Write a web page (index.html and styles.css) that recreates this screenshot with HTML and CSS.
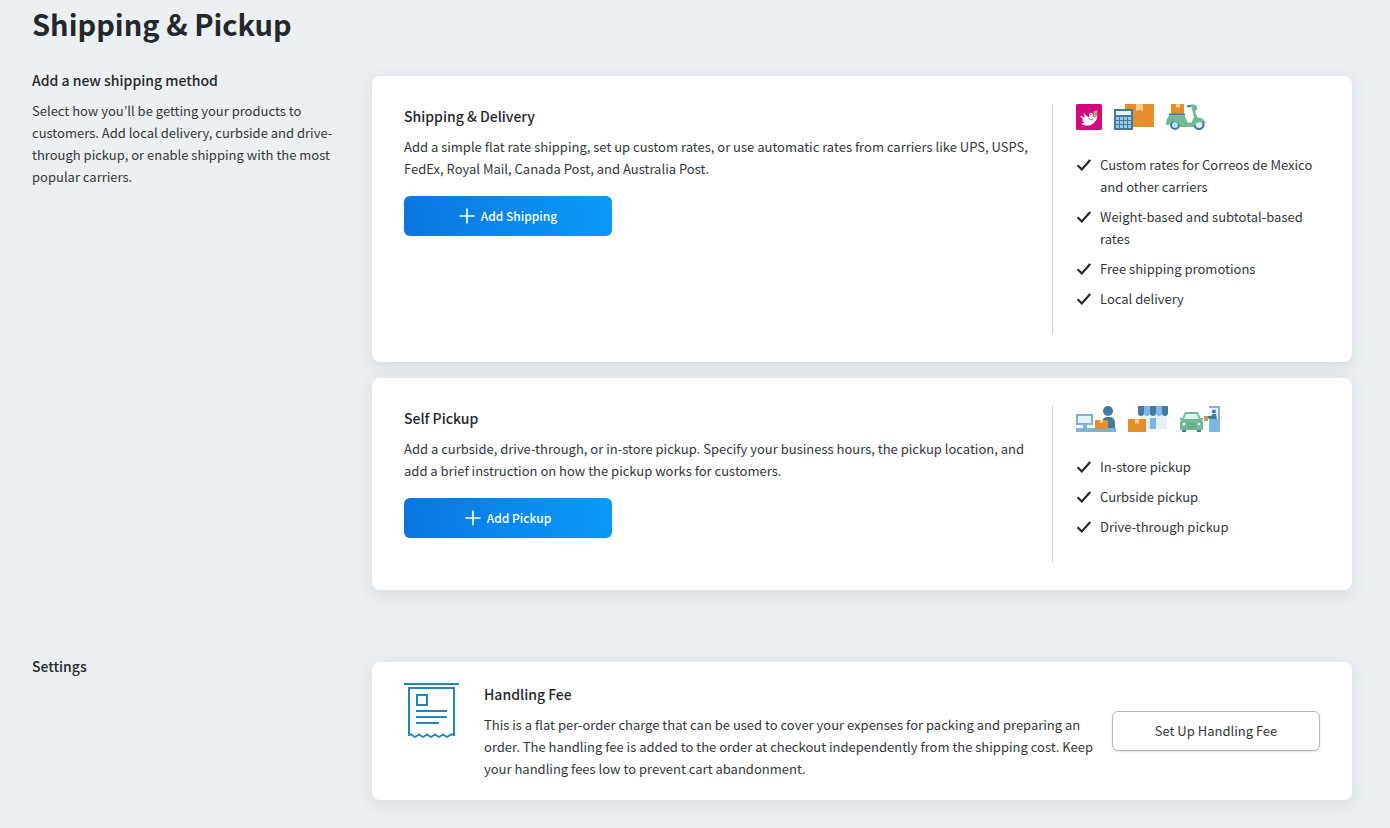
FILE: index.html
```html
<!DOCTYPE html>
<html lang="en">
<head>
<meta charset="utf-8">
<meta name="viewport" content="width=device-width, initial-scale=1">
<title>Shipping &amp; Pickup</title>
<link rel="stylesheet" href="styles.css">
</head>
<body>
<svg class="sprite" aria-hidden="true">
  <symbol id="check" viewBox="0 0 16 16"><path d="M1.600 8.200l4.200 4.300L14.200 3" fill="none" stroke="currentColor" stroke-width="2.200"/></symbol>
  <symbol id="plus" viewBox="0 0 16 16"><path d="M8 .5v15M.5 8h15" fill="none" stroke="currentColor" stroke-width="1.600"/></symbol>
</svg>
<main class="page">
  <h1 class="page-title">Shipping &amp; Pickup</h1>

  <section class="section">
    <div class="intro">
      <h2 class="heading">Add a new shipping method</h2>
      <p class="text">Select how you’ll be getting your products to customers. Add local delivery, curbside and drive-through pickup, or enable shipping with the most popular carriers.</p>
    </div>
    <div class="cards">
      <article class="card">
        <div class="card-main">
          <h3 class="heading">Shipping &amp; Delivery</h3>
          <p class="text">Add a simple flat rate shipping, set up custom rates, or use automatic rates from carriers like UPS, USPS, FedEx, Royal Mail, Canada Post, and Australia Post.</p>
          <button class="btn btn-primary" type="button"><svg class="plus" aria-hidden="true"><use href="#plus"/></svg>Add Shipping</button>
        </div>
        <div class="card-side">
          <div class="icons">
            <svg width="26" height="26" viewBox="0 0 26 26" aria-hidden="true">
              <rect width="26" height="26" rx="1.500" fill="#d6067f"/>
              <path d="M4 11.500l5 2L7.500 9l4.500 4 1.500-.5-.5-2.500 2-1.500 2 1.500.5 3.500 4-2-1 4-2.500 3.500-4 2.500H9l-4-1.800 3.500-.9-3-2.300h2z" fill="#fff"/>
              <path d="M12.500 13.500l2 2.500 3-1" fill="none" stroke="#d6067f" stroke-width=".7"/>
              <circle cx="14.800" cy="10.500" r=".6" fill="#5c1140"/>
              <path d="M17.500 7.500l4-1.500-.5 6.500-3 1.500z" fill="#c3a36a"/>
            </svg>
            <svg width="40" height="26" viewBox="0 0 40 26" aria-hidden="true">
              <path d="M11 0h29v23H11z" fill="#e58e2e"/>
              <path d="M22 0h7v7l-3.500-1L22 7z" fill="#f6cf83"/>
              <path d="M0 5h19v21H0z" fill="#447a9c"/>
              <path d="M2 7h15v4H2z" fill="#e4f3fa"/>
              <path d="M2 13h3v3H2zm4 0h3v3H6zm4 0h3v3h-3zm4 0h3v3h-3zM2 17h3v3H2zm4 0h3v3H6zm4 0h3v3h-3zm4 0h3v3h-3zM2 21h3v3H2zm4 0h3v3H6zm4 0h3v3h-3zm4 0h3v3h-3z" fill="#98c8e9"/>
            </svg>
            <svg width="40" height="26" viewBox="0 0 40 26" aria-hidden="true">
              <circle cx="9" cy="21" r="4" fill="#b9dded" stroke="#447a9c" stroke-width="2"/>
              <circle cx="33" cy="20.500" r="4.500" fill="#dceef4" stroke="#447a9c" stroke-width="2.200"/>
              <path d="M5 0h13v10H5z" fill="#e58e2e"/><path d="M10 0h4v4l-2-1-2 1z" fill="#f6cf83"/>
              <path d="M21 1.200h4v2h-4z" fill="#447a9c"/>
              <path d="M3 9.500h16v2H3z" fill="#447a9c"/>
              <path d="M24 .5h4l3 1.500v4l-2 1 2.500 6.500c4.500 0 7.500 3 8.500 6-5-3-11-1-12 3.500H14c0-6-9-8-11-2H0c0-6 2-9.500 6-9.500h12.500l3 7h4L28 13 25.500 3z" fill="#71b995"/>
            </svg>
          </div>
          <ul class="features">
            <li class="feature"><svg class="check" aria-hidden="true"><use href="#check"/></svg><span>Custom rates for Correos de Mexico and other carriers</span></li>
            <li class="feature"><svg class="check" aria-hidden="true"><use href="#check"/></svg><span>Weight-based and subtotal-based rates</span></li>
            <li class="feature"><svg class="check" aria-hidden="true"><use href="#check"/></svg><span>Free shipping promotions</span></li>
            <li class="feature"><svg class="check" aria-hidden="true"><use href="#check"/></svg><span>Local delivery</span></li>
          </ul>
        </div>
      </article>

      <article class="card">
        <div class="card-main">
          <h3 class="heading">Self Pickup</h3>
          <p class="text">Add a curbside, drive-through, or in-store pickup. Specify your business hours, the pickup location, and add a brief instruction on how the pickup works for customers.</p>
          <button class="btn btn-primary" type="button"><svg class="plus" aria-hidden="true"><use href="#plus"/></svg>Add Pickup</button>
        </div>
        <div class="card-side">
          <div class="icons">
            <svg width="40" height="26" viewBox="0 0 40 26" aria-hidden="true">
              <circle cx="32" cy="5" r="5" fill="#447a9c"/>
              <path d="M26 23v-6c0-3 2-6 5-6h3c3 0 5 3 5 6v6z" fill="#447a9c"/>
              <path d="M1 9h15v9H1z" fill="#e4f3fa" stroke="#7fb2d2" stroke-width="2"/>
              <path d="M7 19h4v3H7z" fill="#7fb2d2"/>
              <path d="M0 22h40v4H0z" fill="#7fb2d2"/>
              <path d="M19 14h13v9H19z" fill="#e58e2e"/><path d="M24 14h3v3h-3z" fill="#f6cf83"/>
            </svg>
            <svg width="40" height="26" viewBox="0 0 40 26" aria-hidden="true">
              <path d="M12 8h27v15H12z" fill="#e4f3fa"/>
              <path d="M22 12h6v11h-6z" fill="#7db7e8"/>
              <path d="M10 0h6v7a3 3 0 0 1-6 0zm12 0h6v7a3 3 0 0 1-6 0zm12 0h6v7a3 3 0 0 1-6 0z" fill="#447a9c"/>
              <path d="M16 0h6v7a3 3 0 0 1-6 0zm12 0h6v7a3 3 0 0 1-6 0z" fill="#7db7e8"/>
              <path d="M0 13h18v13H0z" fill="#e58e2e"/><path d="M7 13h4v5l-2-1-2 1z" fill="#f6cf83"/>
            </svg>
            <svg width="40" height="26" viewBox="0 0 40 26" aria-hidden="true">
              <path d="M29 0h11v14h-2V2h-9z" fill="#7fb2d2"/><path d="M29 2h9v11h-9z" fill="#e4f3fa"/>
              <circle cx="34" cy="5.500" r="2" fill="#447a9c"/>
              <path d="M26 10h5l2-2h3l1 5h-6l-5-1z" fill="#447a9c"/>
              <path d="M24 10h4v5h-4z" fill="#bd9c60"/>
              <path d="M29 13h11v13H29z" fill="#7db7e8"/>
              <path d="M2 22h4v4H2zm15 0h4v4h-4z" fill="#447a9c"/>
              <path d="M0 12h3v2H0zm20 0h3v2h-3z" fill="#71b995"/>
              <path d="M5 6h13l3 7 2 3v8H0v-8l2-3z" fill="#71b995"/>
              <path d="M6 8h11l2 5H4z" fill="#dcf1f2"/>
              <circle cx="4" cy="18" r="1.500" fill="#e4f3fa"/><circle cx="19" cy="18" r="1.500" fill="#e4f3fa"/>
              <path d="M7 18h9M7 21h9" stroke="#5aa382"/>
            </svg>
          </div>
          <ul class="features">
            <li class="feature"><svg class="check" aria-hidden="true"><use href="#check"/></svg><span>In-store pickup</span></li>
            <li class="feature"><svg class="check" aria-hidden="true"><use href="#check"/></svg><span>Curbside pickup</span></li>
            <li class="feature"><svg class="check" aria-hidden="true"><use href="#check"/></svg><span>Drive-through pickup</span></li>
          </ul>
        </div>
      </article>
    </div>
  </section>

  <section class="section">
    <div class="intro">
      <h2 class="heading">Settings</h2>
    </div>
    <div class="cards">
      <article class="card card-setting">
        <svg class="receipt" viewBox="0 0 56 56" aria-hidden="true">
          <g fill="none" stroke="#1f86bf" stroke-width="2">
            <path d="M0 2h55"/>
            <path d="M5 54V6h45v48"/>
            <path d="M4 52.500h3l4 2.500 4-2.500 4 2.500 4-2.500 4 2.500 4-2.500 4 2.500 4-2.500 4 2.500 4-2.500 4 0" stroke-width="1.800"/>
            <path d="M13 13h10v10H13z"/>
            <path d="M12 29h31M12 35h31M12 41h23"/>
          </g>
        </svg>
        <div class="setting-body">
          <h3 class="heading">Handling Fee</h3>
          <p class="text">This is a flat per-order charge that can be used to cover your expenses for packing and preparing an order. The handling fee is added to the order at checkout independently from the shipping cost. Keep your handling fees low to prevent cart abandonment.</p>
        </div>
        <button class="btn btn-outline" type="button">Set Up Handling Fee</button>
      </article>
    </div>
  </section>
</main>
</body>
</html>
```
FILE: styles.css
```css
* {
  box-sizing: border-box;
}

body {
  margin: 0;
  background: #ecf0f3;
  color: #24282d;
  font-family: "Noto Sans CJK KR", "Noto Sans", sans-serif;
  font-size: 13px;
  line-height: 22px;
}

h1,
h2,
h3,
p,
ul {
  margin: 0;
  padding: 0;
}

.sprite {
  display: none;
}

.page {
  padding: 4px 38px 28px 32px;
}

.page-title {
  margin-bottom: 26px;
  font-size: 29px;
  font-weight: 700;
  line-height: 38px;
}

.section {
  display: grid;
  grid-template-columns: 308px minmax(0, 1fr);
  column-gap: 32px;
  margin-bottom: 64px;
}

.section:last-child {
  margin-bottom: 0;
}

.heading {
  margin-bottom: 8px;
  font-size: 14px;
  font-weight: 500;
  line-height: 24px;
}

.text {
  color: #33373b;
}

.cards {
  display: flex;
  flex-direction: column;
  gap: 16px;
  padding-top: 8px;
}

.card {
  display: flex;
  padding: 28px 32px;
  border-radius: 8px;
  background: #fff;
  box-shadow: 0 4px 16px rgba(40, 60, 80, 0.12);
}

.card-main {
  flex: 1;
  padding-right: 22px;
}

.card-side {
  flex: none;
  width: 268px;
  padding: 0 0 24px 23px;
  border-left: 1px solid #cdd2d5;
}

.icons {
  display: flex;
  gap: 12px;
  height: 28px;
  margin-bottom: 22px;
}

.features {
  display: flex;
  flex-direction: column;
  gap: 8px;
  list-style: none;
}

.feature {
  display: flex;
  gap: 8px;
  color: #33373b;
}

.check {
  flex: none;
  width: 16px;
  height: 16px;
  margin-top: 3px;
  color: #24282d;
}

.btn {
  display: flex;
  align-items: center;
  justify-content: center;
  gap: 6px;
  width: 208px;
  height: 40px;
  border: 0;
  border-radius: 6px;
  font: inherit;
  cursor: pointer;
}

.btn-primary {
  margin-top: 16px;
  background: linear-gradient(75deg, #0a74de, #0a9bfb);
  color: #fff;
  font-size: 12px;
  font-weight: 500;
}

.plus {
  width: 16px;
  height: 16px;
}

.card-setting {
  padding: 20px 32px;
}

.receipt {
  flex: none;
  width: 56px;
  height: 56px;
  margin-right: 24px;
}

.setting-body {
  flex: 1;
  padding-right: 16px;
}

.btn-outline {
  flex: none;
  align-self: center;
  border: 1px solid #b3bbbe;
  background: #fff;
  color: #33373b;
  box-shadow: 0 1px 2px rgba(40, 60, 80, 0.15);
}
```
